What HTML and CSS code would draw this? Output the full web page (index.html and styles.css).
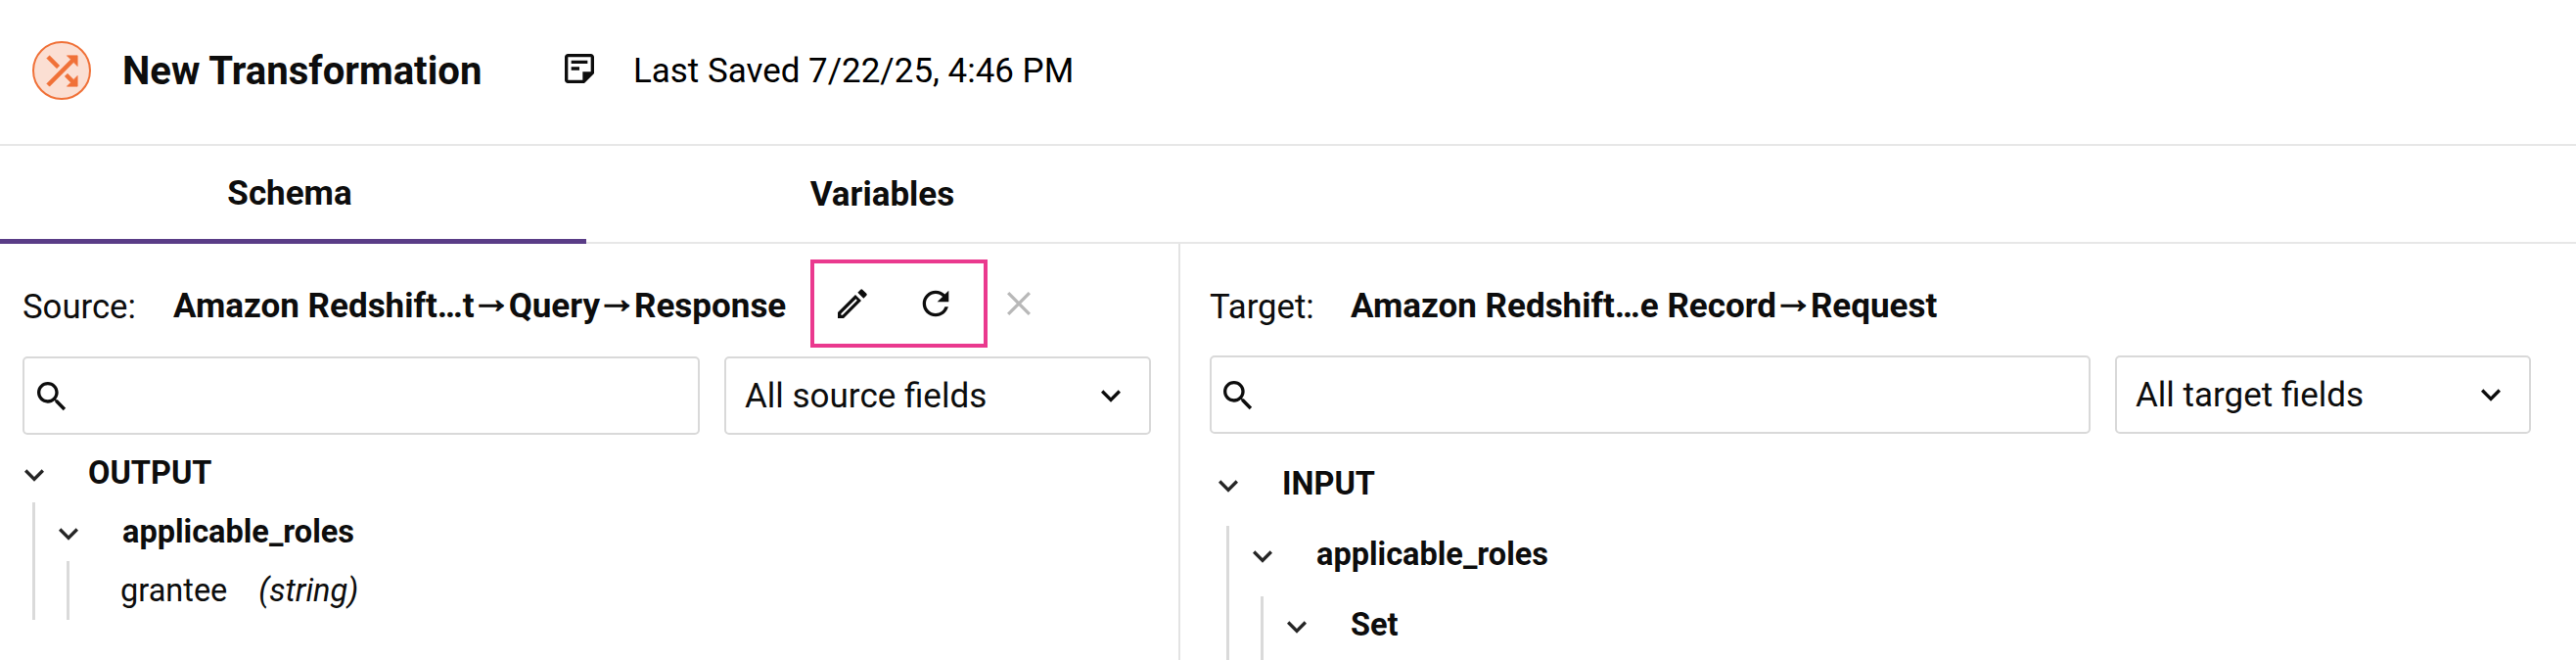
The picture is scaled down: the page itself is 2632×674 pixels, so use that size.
FILE: index.html
```
<!DOCTYPE html>
<html lang="en">
<head>
<meta charset="utf-8">
<title>New Transformation</title>
<link rel="stylesheet" href="styles.css">
</head>
<body>
<svg class="defs" aria-hidden="true">
  <symbol id="chevron" viewBox="0 0 24 24"><path d="M7.41 8.59 12 13.17l4.59-4.58L18 10l-6 6-6-6z"/></symbol>
  <symbol id="search" viewBox="0 0 24 24"><path d="M15.5 14h-.79l-.28-.27C15.41 12.59 16 11.11 16 9.5 16 5.91 13.09 3 9.5 3S3 5.91 3 9.5 5.91 16 9.5 16c1.61 0 3.09-.59 4.23-1.57l.27.28v.79l5 4.99L20.49 19l-4.99-5zm-6 0C7.01 14 5 11.99 5 9.5S7.01 5 9.5 5 14 7.01 14 9.5 11.99 14 9.5 14z"/></symbol>
</svg>

<header class="header">
  <span class="badge">
    <svg class="icon shuffle" viewBox="0 0 24 24"><path d="M10.59 9.17 5.41 4 4 5.41l5.17 5.17 1.42-1.41zM14.5 4l2.04 2.04L4 18.59 5.41 20 17.96 7.46 20 9.5V4h-5.5zm.33 9.41-1.41 1.41 3.13 3.13L14.5 20H20v-5.5l-2.04 2.04-3.13-3.13z"/></svg>
  </span>
  <h1 class="title">New Transformation</h1>
  <svg class="icon note" viewBox="0 0 24 24"><path d="M5 3c-1.1 0-2 .9-2 2v14c0 1.1.9 2 2 2h10l6-6V5c0-1.1-.9-2-2-2H5zm0 2h14v9h-5v5H5V5zm2 2v2h10V7H7zm0 4v2h5v-2H7z"/></svg>
  <span class="saved">Last Saved 7/22/25, 4:46 PM</span>
</header>

<nav class="tabs">
  <a class="tab tab-active">Schema</a>
  <a class="tab">Variables</a>
</nav>

<main class="panels">
  <section class="panel source">
    <div class="heading">
      <span class="label">Source:</span>
      <strong class="path">Amazon Redshift…t<span class="arrow">→</span>Query<span class="arrow">→</span>Response</strong>
      <span class="actions">
        <svg class="icon" viewBox="0 0 24 24"><path fill-rule="evenodd" d="M3 17.4 13.8 6.6l3.6 3.6L6.6 21H3zM5 18.2V19h.9l9-9-.8-.8zM15.2 5.2 17 3.4q.5-.5 1.1 0L20.6 5.9q.6.6 0 1.2L18.8 8.8z"/></svg>
        <svg class="icon" viewBox="0 0 24 24"><path d="M17.65 6.35A7.958 7.958 0 0 0 12 4c-4.42 0-7.99 3.58-7.99 8s3.57 8 7.99 8c3.73 0 6.84-2.55 7.73-6h-2.08A5.99 5.99 0 0 1 12 18c-3.31 0-6-2.69-6-6s2.69-6 6-6c1.66 0 3.14.69 4.22 1.78L13 11h7V4l-2.35 2.35z"/></svg>
      </span>
      <svg class="clear" viewBox="0 0 24 24"><path d="M2 2l20 20M22 2 2 22"/></svg>
    </div>
    <div class="filters">
      <div class="search"><svg class="icon"><use href="#search"/></svg></div>
      <div class="select"><span>All source fields</span><svg class="icon"><use href="#chevron"/></svg></div>
    </div>
    <div class="tree">
      <div class="row branch"><svg class="icon"><use href="#chevron"/></svg><span>OUTPUT</span></div>
      <div class="children">
        <div class="row branch"><svg class="icon"><use href="#chevron"/></svg><span>applicable_roles</span></div>
        <div class="children">
          <div class="row leaf"><span>grantee</span><em>(string)</em></div>
        </div>
      </div>
    </div>
  </section>

  <section class="panel target">
    <div class="heading">
      <span class="label">Target:</span>
      <strong class="path">Amazon Redshift…e Record<span class="arrow">→</span>Request</strong>
    </div>
    <div class="filters">
      <div class="search"><svg class="icon"><use href="#search"/></svg></div>
      <div class="select"><span>All target fields</span><svg class="icon"><use href="#chevron"/></svg></div>
    </div>
    <div class="tree">
      <div class="row branch"><svg class="icon"><use href="#chevron"/></svg><span>INPUT</span></div>
      <div class="children">
        <div class="row branch"><svg class="icon"><use href="#chevron"/></svg><span>applicable_roles</span></div>
        <div class="children">
          <div class="row branch"><svg class="icon"><use href="#chevron"/></svg><span>Set</span></div>
        </div>
      </div>
    </div>
  </section>
</main>
</body>
</html>
```
FILE: styles.css
```
* { box-sizing: border-box; }
html, body { height: 100%; }
body {
  margin: 0;
  display: flex;
  flex-direction: column;
  overflow: hidden;
  background: #fff;
  color: #0d0d0d;
  font-family: Roboto, "Liberation Sans", sans-serif;
  font-size: 35px;
  line-height: 42px;
}
.defs { display: none; }
.icon { display: block; flex: none; width: 40px; height: 40px; fill: currentColor; }

.header {
  flex: none;
  display: flex;
  align-items: center;
  height: 149px;
  padding: 0 33px 3px;
  border-bottom: 2px solid #e7e7e7;
}
.badge {
  display: flex;
  align-items: center;
  justify-content: center;
  width: 60px;
  height: 60px;
  border: 2px solid #f07138;
  border-radius: 50%;
  background: #fbdfd3;
  color: #f07138;
}
.shuffle { width: 47px; height: 47px; stroke: currentColor; stroke-width: 0.35; }
.title { margin: 0 0 0 32px; padding-top: 2px; font-size: 40.1px; font-weight: 700; width: 447px; white-space: nowrap; }
.note { margin-top: -4px; }
.saved { margin-left: 35px; padding-top: 2px; color: #000; font-size: 34.95px; }

.tabs {
  flex: none;
  display: flex;
  height: 100px;
  border-bottom: 2px solid #e7e7e7;
}
.tab {
  width: 599px;
  height: 100px;
  padding: 29px 0 0 6px;
  text-align: center;
  font-weight: 700;
}
.tab-active { padding: 28px 7px 0 0; border-bottom: 5px solid #5a3d87; }

.panels { flex: 1; min-height: 0; display: flex; }
.panel { display: flex; flex-direction: column; }
.panel > * { flex: none; }
.source { width: 1206px; padding: 16px 28px 0 23px; border-right: 2px solid #e3e3e3; }
.target { flex: 1; padding: 16px 46px 0 30px; }

.heading { display: flex; align-items: center; height: 90px; white-space: nowrap; }
.label, .path { padding-top: 5px; }
.label { font-size: 34.7px; }
.source .label { width: 154px; }
.target .label { width: 144px; }
.path { font-weight: 700; }
.source .path { width: 651px; }
.arrow {
  margin: 0 -3px;
  font-family: "Liberation Sans", Arial, sans-serif;
  font-size: 41px;
  line-height: 20px;
  vertical-align: 5px;
  -webkit-text-stroke: 1.3px currentColor;
}
.actions {
  display: flex;
  align-items: center;
  gap: 45px;
  width: 181px;
  height: 90px;
  padding-left: 19px;
  border: 4px solid #ea398e;
}
.clear { width: 26px; height: 26px; margin-left: 19px; fill: none; stroke: #b8b8b8; stroke-width: 3; }

.filters { display: flex; gap: 25px; height: 80px; }
.source .filters { margin-top: 9px; }
.target .filters { margin-top: 8px; }
.search, .select {
  display: flex;
  align-items: center;
  height: 80px;
  border: 2px solid #d9d9d9;
  border-radius: 5px;
}
.search { flex: 1; padding: 2px 0 0 8px; }
.target .search { padding-left: 7px; }
.select { justify-content: space-between; padding: 0 19px; }
.select span { padding-top: 1px; }
.source .select { width: 436px; }
.target .select { width: 425px; }

.tree { font-size: 32.5px; }
.source .tree { margin-top: 9px; --row: 60px; }
.target .tree { margin-top: 22px; --row: 72px; }
.row { display: flex; align-items: center; height: var(--row); }
.branch { font-weight: 700; gap: 35px; margin-left: -8px; }
.branch .icon { margin-top: 4px; fill: #262626; }
.target .branch { margin-left: -1px; padding-bottom: 14px; }
.children { margin-left: 10px; padding-left: 22px; border-left: 3px solid #dadada; }
.target .children { margin-left: 17px; padding-left: 15px; }
.leaf { gap: 32px; padding-left: 30px; }
```
